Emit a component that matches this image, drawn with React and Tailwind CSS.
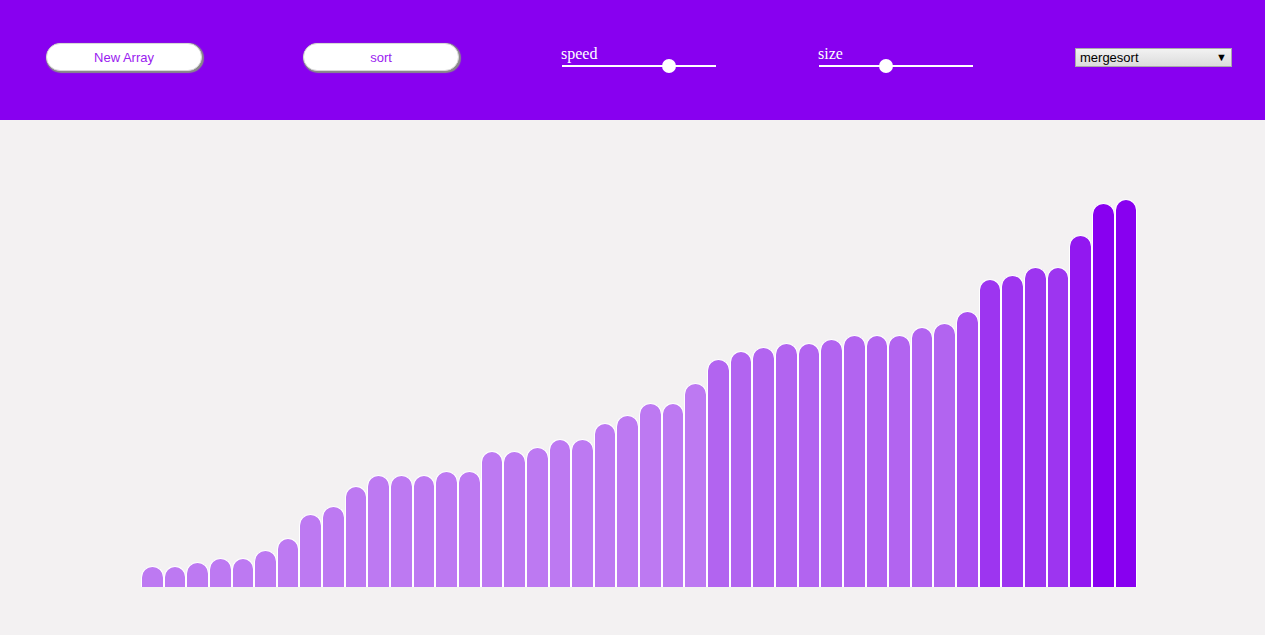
import React from "react";

const heights = [20, 20, 24, 28, 28, 36, 48, 72, 80, 100, 111, 111, 111, 115, 115, 135, 135, 139, 147, 147, 163, 171, 183, 183, 203, 227, 235, 239, 243, 243, 247, 251, 251, 251, 259, 263, 275, 307, 311, 319, 319, 351, 383, 387];

function colorFor(h) {
  if (h < 210) return "#bd79f2";
  if (h < 270) return "#b264f0";
  if (h < 300) return "#a94ff0";
  if (h < 340) return "#9d35f0";
  if (h < 370) return "#9218f0";
  return "#8800f0";
}

function Slider({ label, pct }) {
  return (
    <div className="flex w-[155px] flex-col pt-[2px]">
      <div className="h-[18px] text-[16px] leading-[18px] text-white" style={{ fontFamily: '"Liberation Serif", serif' }}>
        {label}
      </div>
      <div className="relative ml-[1px] h-[7px] w-[154px]">
        <div className="absolute left-0 right-0 top-[2px] h-[2px] bg-white" />
        <div
          className="absolute top-[-4px] h-[14px] w-[14px] -translate-x-1/2 rounded-full bg-white"
          style={{ left: `${pct}%` }}
        />
      </div>
    </div>
  );
}

function Btn({ children }) {
  return (
    <button
      className="h-[28px] w-[156px] rounded-full border border-[#d8d8d8] bg-white pt-[1px] text-[13px] text-[#9a20f0] shadow-[1px_1px_1px_1px_#8a8a8a]"
      style={{ fontFamily: '"Liberation Sans", Arial, sans-serif' }}
    >
      {children}
    </button>
  );
}

export default function App() {
  return (
    <div className="min-h-[635px] w-full bg-[#f3f1f2]" style={{ fontFamily: '"Liberation Sans", Arial, sans-serif' }}>
      <div className="flex h-[120px] items-start bg-[#8800f0] pl-[46px] pt-[43px]">
        <Btn>New Array</Btn>
        <div className="ml-[101px]">
          <Btn>sort</Btn>
        </div>
        <div className="ml-[102px]">
          <Slider label="speed" pct={69.5} />
        </div>
        <div className="ml-[102px]">
          <Slider label="size" pct={43.5} />
        </div>
        <div className="ml-[102px] mt-[5px] flex h-[19px] w-[157px] items-center justify-between border border-[#a9a9a9] bg-gradient-to-b from-[#f2f2f2] to-[#dcdcdc] pl-[4px] pr-[4px] text-[13px] leading-[17px] text-black">
          <span>mergesort</span>
          <span className="text-[11px]">▼</span>
        </div>
      </div>
      <div className="flex h-[467px] items-end pl-[141px]">
        <div className="flex w-[996px] items-end">
          {heights.map((h, i) => (
            <div
              key={i}
              className="flex-1 rounded-t-full border-x border-t border-white"
              style={{ height: `${h + 1}px`, backgroundColor: colorFor(h) }}
            />
          ))}
        </div>
      </div>
    </div>
  );
}
